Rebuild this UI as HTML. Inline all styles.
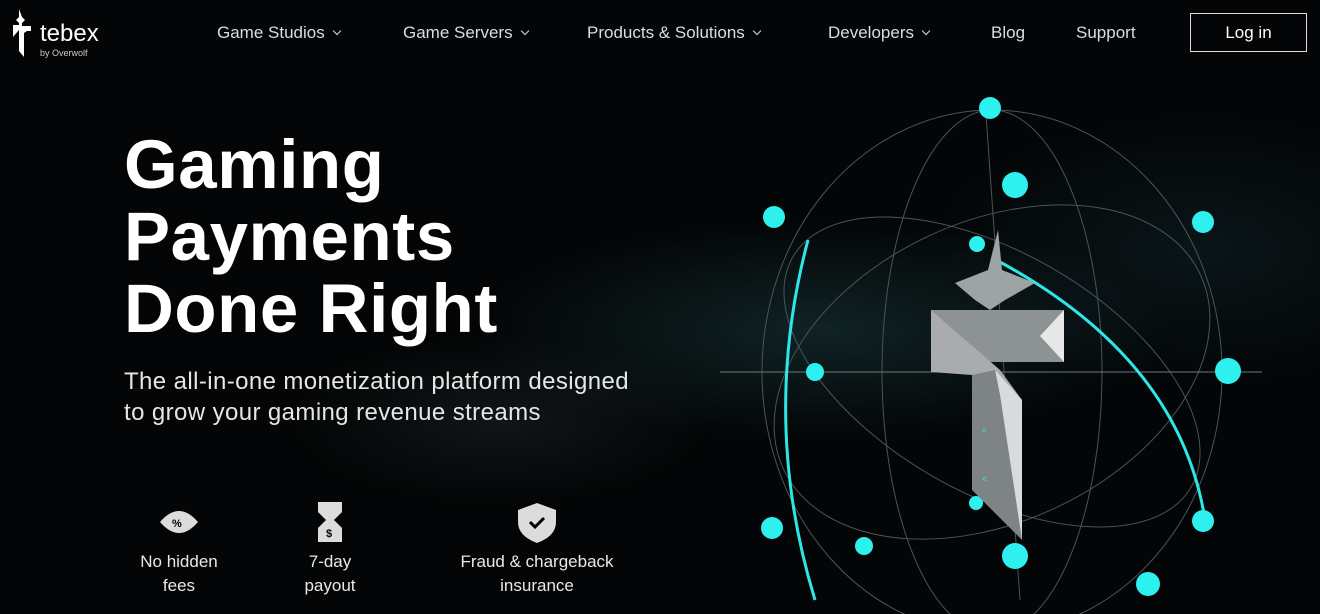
<!DOCTYPE html>
<html><head><meta charset="utf-8"><style>
*{margin:0;padding:0;box-sizing:border-box}
body{width:1320px;height:614px;overflow:hidden;background:#000;font-family:"Liberation Sans",sans-serif;color:#fff;position:relative}
.bg{position:absolute;inset:0;background:radial-gradient(ellipse 500px 160px at 820px 330px,rgba(40,90,95,.35),transparent 70%),radial-gradient(ellipse 300px 120px at 500px 420px,rgba(60,70,75,.25),transparent 70%),radial-gradient(ellipse 400px 200px at 1200px 250px,rgba(30,70,80,.25),transparent 70%),#030506}
.nav a{position:absolute;top:23px;font-size:17px;color:#d8dde6}
.nav .c:after{content:"";display:inline-block;width:5px;height:5px;border-right:1.5px solid #d8dde6;border-bottom:1.5px solid #d8dde6;transform:rotate(45deg);margin-left:9px;position:relative;top:-4px}
.login{position:absolute;left:1190px;top:13px;width:117px;height:39px;border:1px solid #ddd;text-align:center;line-height:37px;font-size:17px}
h1{position:absolute;left:124px;top:129px;font-size:69px;line-height:72px;font-weight:bold;letter-spacing:0.6px}
.sub{position:absolute;left:124px;top:366px;font-size:24px;line-height:31px;color:#e6e6e6;letter-spacing:0.4px}
.f{position:absolute;top:550px;text-align:center;font-size:17px;line-height:24px;color:#e8e8e8}
</style></head><body>
<div class="bg"></div>
<svg style="position:absolute;left:0;top:0" width="1320" height="614">
<g fill="#fff"><path d="M19 9l3 8 3 3-3 3v3h9v5h-4l-3 2v24l-5-6V30l-6 7V25h6v-2l-3-3 3-3z"/></g>
<text x="40" y="41" fill="#fff" font-size="24" font-family="Liberation Sans">tebex</text>
<text x="40" y="56" fill="#ccc" font-size="9" font-family="Liberation Sans">by Overwolf</text>
<g fill="none" stroke="#4a5558" stroke-width="1">
<ellipse cx="992" cy="372" rx="230" ry="262"/>
<ellipse cx="992" cy="372" rx="110" ry="262"/>
<ellipse cx="992" cy="372" rx="230" ry="150" transform="rotate(-25 992 372)"/>
<ellipse cx="992" cy="372" rx="230" ry="120" transform="rotate(30 992 372)"/>
<line x1="720" y1="372" x2="1262" y2="372" stroke="#6a7a7c"/>
<line x1="985" y1="100" x2="1020" y2="600"/>
</g>
<path d="M808 240 Q760 420 815 600" fill="none" stroke="#2ee6e6" stroke-width="3"/>
<path d="M1000 262 Q1180 360 1205 520" fill="none" stroke="#2ee6e6" stroke-width="3"/>
<g fill="#2ef0ee">
<circle cx="990" cy="108" r="11"/><circle cx="1015" cy="185" r="13"/><circle cx="774" cy="217" r="11"/><circle cx="1203" cy="222" r="11"/><circle cx="977" cy="244" r="8"/><circle cx="815" cy="372" r="9"/><circle cx="1228" cy="371" r="13"/><circle cx="772" cy="528" r="11"/><circle cx="864" cy="546" r="9"/><circle cx="1203" cy="521" r="11"/><circle cx="1015" cy="556" r="13"/><circle cx="1148" cy="584" r="12"/><circle cx="976" cy="503" r="7"/>
</g>
<g>
<path d="M998 230 L1002 270 L1035 283 L1005 300 L990 310 L975 300 L955 283 L988 270Z" fill="#9ea3a6"/>
<rect x="931" y="310" width="133" height="52" fill="#8d9295"/>
<path d="M1064 310 L1040 336 L1064 362Z" fill="#e8e8e8"/>
<path d="M948 325 L1000 370 L1022 400 L1022 540 L972 480 L972 375 L931 372 L931 310Z" fill="#a8acaf"/>
<path d="M995 370 L1022 400 L1022 540 L1000 395Z" fill="#d8dadc"/>
<path d="M972 375 L995 370 L1000 395 L1022 540 L972 490Z" fill="#7e8386"/>
<text x="982" y="435" fill="#2ef0ee" font-size="9">^</text>
<text x="982" y="482" fill="#2ef0ee" font-size="9">&lt;</text>
</g>
<g fill="#dcdcdc">
<path d="M160 522 Q179 500 198 522 Q179 544 160 522Z"/>
<path d="M318 502h24v10l-8 8 8 8v14h-24v-14l8-8-8-8z"/>
<path d="M537 503l19 7v12q0 14-19 21q-19-7-19-21v-12z"/>
</g>
<text x="172" y="527" font-size="11" font-weight="bold" fill="#000">%</text>
<text x="326" y="537" font-size="11" font-weight="bold" fill="#000">$</text>
<path d="M530 522l5 5 9-9" stroke="#000" stroke-width="3" fill="none"/>
</svg>
<div class="nav">
<a class="c" style="left:217px">Game Studios</a>
<a class="c" style="left:403px">Game Servers</a>
<a class="c" style="left:587px">Products &amp; Solutions</a>
<a class="c" style="left:828px">Developers</a>
<a style="left:991px">Blog</a>
<a style="left:1076px">Support</a>
</div>
<div class="login">Log in</div>
<h1>Gaming<br>Payments<br>Done Right</h1>
<div class="sub">The all-in-one monetization platform designed<br>to grow your gaming revenue streams</div>
<div class="f" style="left:124px;width:110px">No hidden<br>fees</div>
<div class="f" style="left:285px;width:90px">7-day<br>payout</div>
<div class="f" style="left:437px;width:200px">Fraud &amp; chargeback<br>insurance</div>
</body></html>
